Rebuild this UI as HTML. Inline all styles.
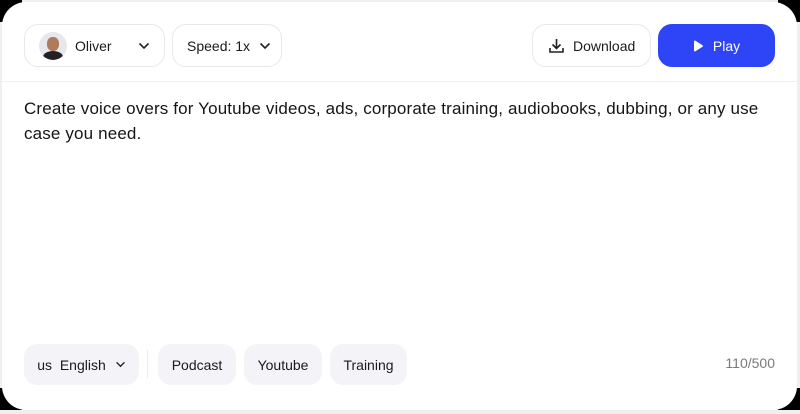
<!DOCTYPE html>
<html><head><style>
*{box-sizing:border-box;margin:0;padding:0}
body{width:800px;height:414px;background:#efefef;position:relative;overflow:hidden;font-family:"Liberation Sans",sans-serif;color:#1a1a1a}
.c{position:absolute;width:22px;height:22px;background:#000}
.card{position:absolute;left:2px;top:2px;width:795px;height:408px;background:#fff;border-radius:24px}
.btn{position:absolute;top:24px;height:43px;border:1px solid #e8e8ec;border-radius:14px;display:flex;align-items:center;font-size:14px;background:#fff}
.pill{position:absolute;top:344px;height:41px;background:#f4f3f8;border-radius:13px;display:flex;align-items:center;justify-content:center;font-size:14px}
</style></head><body>
<div class="c" style="left:0;top:0"></div><div class="c" style="right:0;top:0"></div>
<div class="c" style="left:0;top:388px"></div><div class="c" style="right:0;top:388px"></div>
<div class="card"></div>
<div class="btn" style="left:24px;width:141px">
 <div style="margin-left:14px;width:28px;height:28px;border-radius:50%;background:#e6e8ee;overflow:hidden;position:relative">
  <div style="position:absolute;left:8px;top:5px;width:12px;height:14px;border-radius:45%;background:#b07a5e"></div>
  <div style="position:absolute;left:4px;top:19px;width:20px;height:12px;border-radius:50% 50% 0 0;background:#222"></div>
 </div>
 <span style="margin-left:8px">Oliver</span>
 <svg style="margin-left:26px" width="12" height="8" viewBox="0 0 12 8"><path d="M1.5 1.5l4.5 4.5 4.5-4.5" fill="none" stroke="#222" stroke-width="1.6"/></svg>
</div>
<div class="btn" style="left:172px;width:110px;padding-left:14px">Speed: 1x
 <svg style="margin-left:9px" width="12" height="8" viewBox="0 0 12 8"><path d="M1.5 1.5l4.5 4.5 4.5-4.5" fill="none" stroke="#222" stroke-width="1.6"/></svg></div>
<div class="btn" style="left:532px;width:119px;padding-left:15px">
 <svg width="17" height="17" viewBox="0 0 17 17"><path d="M8.5 2v9M4.5 7.5l4 4 4-4M2 11v4h13v-4" fill="none" stroke="#222" stroke-width="1.6"/></svg>
 <span style="margin-left:8px">Download</span></div>
<div class="btn" style="left:658px;width:117px;background:#2d45f6;border-color:#2d45f6;color:#fff;justify-content:center;font-weight:500">
 <svg width="11" height="12" viewBox="0 0 11 12"><path d="M1 1.5v9a1 1 0 0 0 1.5.8l7-4.5a1 1 0 0 0 0-1.6l-7-4.5A1 1 0 0 0 1 1.5z" fill="#fff"/></svg>
 <span style="margin-left:9px">Play</span></div>
<div style="position:absolute;left:2px;top:81px;width:795px;height:1px;background:#f0f0f2"></div>
<div style="position:absolute;left:24px;top:96px;width:770px;font-size:17px;letter-spacing:0.15px;line-height:25px;color:#151515;white-space:nowrap">Create voice overs for Youtube videos, ads, corporate training, audiobooks, dubbing, or any use<br>case you need.</div>
<div class="pill" style="left:24px;width:115px">us&nbsp; English
 <svg style="margin-left:9px" width="11" height="7" viewBox="0 0 12 8"><path d="M1.5 1.5l4.5 4.5 4.5-4.5" fill="none" stroke="#222" stroke-width="1.6"/></svg></div>
<div style="position:absolute;left:147px;top:350px;width:1px;height:28px;background:#ececf0"></div>
<div class="pill" style="left:158px;width:78px">Podcast</div>
<div class="pill" style="left:244px;width:78px">Youtube</div>
<div class="pill" style="left:330px;width:77px">Training</div>
<div style="position:absolute;right:25px;top:355px;font-size:14px;color:#7a7a7a">110/500</div>
</body></html>
